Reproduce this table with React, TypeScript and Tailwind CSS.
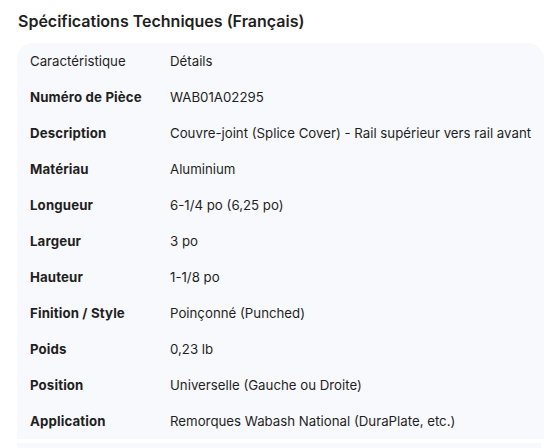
const rows: [string, string][] = [
  ["Numéro de Pièce", "WAB01A02295"],
  ["Description", "Couvre-joint (Splice Cover) - Rail supérieur vers rail avant"],
  ["Matériau", "Aluminium"],
  ["Longueur", "6-1/4 po (6,25 po)"],
  ["Largeur", "3 po"],
  ["Hauteur", "1-1/8 po"],
  ["Finition / Style", "Poinçonné (Punched)"],
  ["Poids", "0,23 lb"],
  ["Position", "Universelle (Gauche ou Droite)"],
  ["Application", "Remorques Wabash National (DuraPlate, etc.)"],
];

export default function App() {
  return (
    <div className="min-h-screen bg-white pl-[17px] pr-[7px] pt-[11px] font-['Inter',sans-serif] text-[#1f1f1f]">
      <h2 className="mb-[12px] pl-px text-[16px] font-semibold leading-[20px]">
        Spécifications Techniques (Français)
      </h2>

      <div className="overflow-hidden rounded-t-2xl bg-[#f8f9fc]">
        <table className="w-full border-collapse text-left text-[13.25px]">
          <thead>
            <tr className="h-9">
              <th className="w-[153px] pl-[13px] pt-px font-normal">Caractéristique</th>
              <th className="pt-px font-normal">Détails</th>
            </tr>
          </thead>
          <tbody>
            {rows.map(([label, value]) => (
              <tr key={label} className="h-9">
                <td className="pl-[13px] pt-px font-bold tracking-[0.01em]">{label}</td>
                <td className="pt-px">{value}</td>
              </tr>
            ))}
          </tbody>
        </table>
      </div>

      {/* scroll track under the table */}
      <div className="mt-[4px] mr-[3px] h-[8px] bg-[#f8f9fc]" />
    </div>
  );
}
